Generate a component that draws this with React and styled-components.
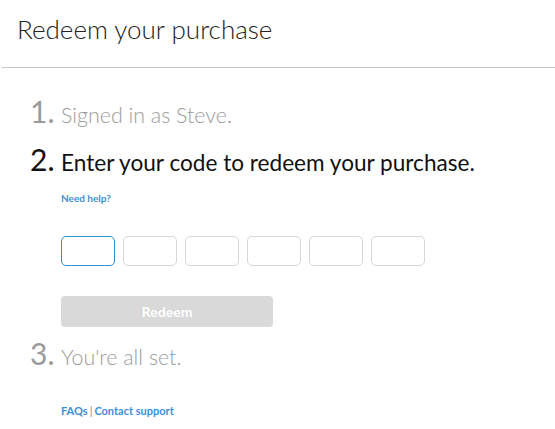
import React from "react";
import styled, { createGlobalStyle } from "styled-components";

const GlobalStyle = createGlobalStyle`
  html, body {
    margin: 0;
    padding: 0;
    background: #fff;
  }
  body {
    font-family: "Lato", "Open Sans", sans-serif;
  }
`;

const Page = styled.div`
  width: 555px;
  height: 429px;
  overflow: hidden;
`;

const Header = styled.div`
  height: 67px;
  margin-left: 2px;
  border-bottom: 1px solid #c4c4c4;
  display: flex;
  align-items: flex-start;
`;

const Title = styled.h1`
  margin: 12px 0 0 15px;
  font-size: 26px;
  font-weight: 300;
  color: #222;
  line-height: 34px;
`;

const Body = styled.div`
  padding: 25px 0 0 30px;
`;

const Step = styled.div`
  display: flex;
  align-items: baseline;
  color: ${(p) => (p.active ? "#111" : "#9a9a9a")};
  margin-top: ${(p) => p.top || 0}px;
  margin-bottom: ${(p) => p.gap || 0}px;
`;

const Num = styled.span`
  font-size: 30px;
  font-weight: 400;
  width: 31px;
  line-height: 36px;
`;

const StepText = styled.span`
  font-size: ${(p) => (p.active ? 22.6 : 21.4)}px;
  font-weight: ${(p) => (p.active ? 400 : 300)};
  line-height: 36px;
`;

const Section = styled.div`
  padding-left: 31px;
`;

const Link = styled.a`
  color: #3c8fd7;
  font-size: 10px;
  font-weight: 700;
  text-decoration: none;
`;

const HelpRow = styled.div`
  margin-top: 8px;
  line-height: 14px;
`;

const Boxes = styled.div`
  display: flex;
  gap: 8px;
  margin-top: 31px;
`;

const Box = styled.div`
  width: 52px;
  height: 28px;
  border: 1px solid ${(p) => (p.focus ? "#2a93d5" : "#d6d6d6")};
  border-radius: 5px;
  background: #fff;
`;

const RedeemButton = styled.button`
  display: block;
  margin-top: 30px;
  width: 212px;
  height: 31px;
  border: none;
  border-radius: 4px;
  background: #d9d9d9;
  color: #fff;
  font-family: "Lato", sans-serif;
  font-weight: 900;
  font-size: 14px;
  text-shadow: 0 0 1px rgba(0, 0, 0, 0.1);
  padding: 0;
`;

const Footer = styled.div`
  margin-top: 29px;
  font-size: 11px;
  font-weight: 700;
  color: #3c8fd7;
  line-height: 14px;
`;

const Sep = styled.span`
  color: #888;
  font-weight: 400;
  margin: 0 2px;
`;

export default function App() {
  return (
    <Page>
      <GlobalStyle />
      <Header>
        <Title>Redeem your purchase</Title>
      </Header>
      <Body>
        <Step gap={8}>
          <Num>1.</Num>
          <StepText>Signed in as Steve.</StepText>
        </Step>
        <Step active>
          <Num>2.</Num>
          <StepText active>Enter your code to redeem your purchase.</StepText>
        </Step>
        <Section>
          <HelpRow>
            <Link href="#">Need help?</Link>
          </HelpRow>
          <Boxes>
            {[0, 1, 2, 3, 4, 5].map((i) => (
              <Box key={i} focus={i === 0} />
            ))}
          </Boxes>
          <RedeemButton disabled>Redeem</RedeemButton>
        </Section>
        <Step top={8}>
          <Num>3.</Num>
          <StepText>You're all set.</StepText>
        </Step>
        <Section>
          <Footer>
            FAQs<Sep>|</Sep>Contact support
          </Footer>
        </Section>
      </Body>
    </Page>
  );
}
